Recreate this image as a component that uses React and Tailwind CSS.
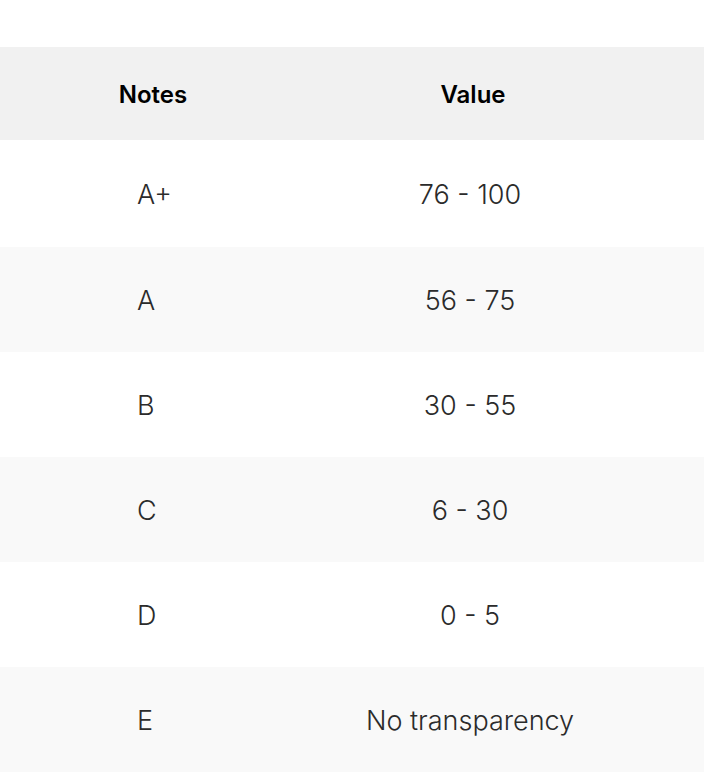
export default function App() {
  const rows = [
    ["A+", "76 - 100", "bg-white", "h-[107px]"],
    ["A", "56 - 75", "bg-[#f9f9f9]", "h-[105px]"],
    ["B", "30 - 55", "bg-white", "h-[105px]"],
    ["C", "6 - 30", "bg-[#f9f9f9]", "h-[105px]"],
    ["D", "0 - 5", "bg-white", "h-[105px]"],
    ["E", "No transparency", "bg-[#f9f9f9]", "h-[105px]"],
  ];
  return (
    <div className="w-[704px] h-[773px] bg-white pt-[47px]" style={{ fontFamily: "Inter, 'Liberation Sans', sans-serif" }}>
      <div className="flex h-[93px] items-center bg-[#f1f1f1] pt-[2px] text-[24px] font-semibold text-black">
        <div className="w-[306px] text-center">Notes</div>
        <div className="w-[328px] pl-[6px] text-center">Value</div>
      </div>
      {rows.map(([n, v, bg, h]) => (
        <div key={n} className={`flex items-center ${bg} ${h} pt-[4px] text-[27px] font-light text-[#2b2b2b]`}>
          <div className="w-[306px] pl-[137px]">{n}</div>
          <div className="w-[328px] text-center">{v}</div>
        </div>
      ))}
    </div>
  );
}
